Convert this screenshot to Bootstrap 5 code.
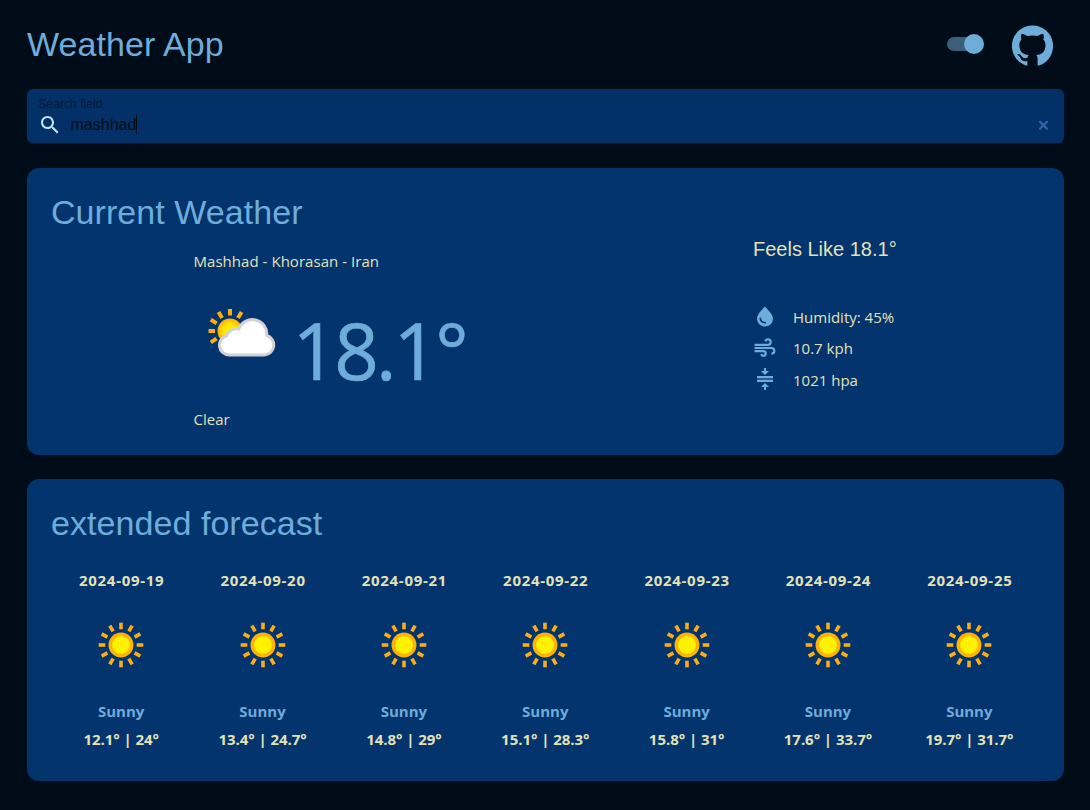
<!DOCTYPE html>
<html lang="en">
<head>
<meta charset="utf-8">
<title>Weather App</title>
<meta name="viewport" content="width=device-width, initial-scale=1">
<link href="https://cdn.jsdelivr.net/npm/bootstrap@5.3.0/dist/css/bootstrap.min.css" rel="stylesheet">
<style>
:root{--sky:#6eacda;--cream:#e2e2b6;--navy:#03346e}
body{background:#000c17;color:var(--cream);font-family:"Open Sans",sans-serif;font-size:15px;line-height:24px;overflow:hidden}
svg{display:block;flex:none}
.page{padding:0 26px 0 27px}
.arial{font-family:"Liberation Sans",Arial,sans-serif}
.title{font-size:34px;line-height:42px;letter-spacing:.06px;color:var(--sky);font-weight:400;margin:0}
.topbar{height:88.5px}
.tools{gap:31.5px;padding:2px 11px 0 0}
.track{width:34px;height:14px;border-radius:7px;background:#3b5f7b;position:relative;margin-bottom:2px}
.knob{position:absolute;width:20px;height:20px;border-radius:50%;background:var(--sky);top:-3px;right:-3.5px}
.search{height:54px;border-radius:6px;background:#033167;padding:9px 15px 0 10.5px;box-shadow:0 1px 2px #031c3a}
.hint{font-size:12px;line-height:13px;color:#021a35;padding-left:1px;letter-spacing:.04px}
.entry{padding-top:2px}
.query{font-size:16px;line-height:24px;color:#000c17;padding-left:9px}
.caret{width:1px;height:19px;background:#000c17}
.clear{margin-top:2px}
.panel{background:var(--navy);border-radius:12px}
.now{height:287px;margin-top:25px;padding:23px 24px 0}
.week{height:302px;margin-top:24.5px;padding:23px 24px 0}
.place{padding-left:142.5px;width:702px;padding-top:16px}
.where{letter-spacing:.04px}
.reading{height:134px;padding-left:8px}
.temp{font-size:78px;line-height:94px;color:var(--sky);letter-spacing:-2.9px;padding:30px 0 0 7px;-webkit-text-stroke:.7px var(--sky)}
.cloud{margin-top:22px}
.feels{font-size:20px;line-height:30px;padding-top:1.5px;margin-bottom:37px}
.metric{height:31.5px;gap:16px}
.press{margin-bottom:2px}
.day{font-weight:700;text-align:center}
.days{margin-left:-.5px}
.date{font-size:15px;letter-spacing:.7px;margin:24px -1px 21px 0}
.cond{color:var(--sky);margin-top:22px}
.range{margin-top:4px;letter-spacing:-.05px}
</style>
</head>
<body>
<svg width="0" height="0" class="position-absolute">
<defs>
<g id="rays" stroke="#f9ae16" stroke-width="3.6"><path id="ray" d="M0-22.3v6.6"/><use href="#ray" transform="rotate(30)"/><use href="#ray" transform="rotate(60)"/><use href="#ray" transform="rotate(90)"/><use href="#ray" transform="rotate(120)"/><use href="#ray" transform="rotate(150)"/><use href="#ray" transform="rotate(180)"/><use href="#ray" transform="rotate(210)"/><use href="#ray" transform="rotate(240)"/><use href="#ray" transform="rotate(270)"/><use href="#ray" transform="rotate(300)"/><use href="#ray" transform="rotate(330)"/></g>
<symbol id="sun" viewBox="-32 -32 64 64"><use href="#rays"/><circle r="12.5" fill="#fdb209"/><circle r="8.7" fill="#fff200" stroke="#ffe000" stroke-width=".8"/></symbol>
</defs>
</svg>
<div class="page">
<header class="topbar d-flex justify-content-between align-items-center">
<h1 class="title arial">Weather App</h1>
<div class="tools d-flex align-items-center">
<div class="track"><div class="knob"></div></div>
<svg width="41" height="41" viewBox="0 0 24 24" fill="#6eacda"><path d="M12 .3a12 12 0 0 0-3.8 23.4c0 0 .8.1.8-.2v-2.4c-3.3.7-4-1.6-4-1.6-.6-1.4-1.4-1.8-1.4-1.8-1-.7.1-.7.1-.7 1.2 0 1.9 1.2 1.9 1.2 1 1.8 2.8 1.3 3.5 1 0-.8.4-1.3.7-1.6-2.7-.3-5.5-1.3-5.5-6 0-1.2.5-2.3 1.3-3.1-.2-.4-.6-1.6 0-3.2 0 0 1-.3 3.4 1.2a11.5 11.5 0 0 1 6 0c2.3-1.5 3.3-1.2 3.3-1.2.6 1.6.2 2.8 0 3.2.9.8 1.3 1.9 1.3 3.2 0 4.6-2.8 5.6-5.5 5.9.5.4.9 1 .9 2.2v3.7c0 .3.8.2.8.2A12 12 0 0 0 12 .3"/></svg>
</div>
</header>
<div class="search arial">
<div class="hint">Search field</div>
<div class="entry d-flex align-items-center">
<svg width="24" height="24" viewBox="0 0 24 24" fill="#c4e4fb"><path d="M15.5 14h-.79l-.28-.27C15.41 12.59 16 11.11 16 9.5 16 5.91 13.09 3 9.5 3S3 5.91 3 9.5 5.91 16 9.5 16c1.61 0 3.09-.59 4.23-1.57l.27.28v.79l5 4.99L20.49 19l-4.99-5zm-6 0C7.01 14 5 11.99 5 9.5S7.01 5 9.5 5 14 7.01 14 9.5 11.99 14 9.5 14z"/></svg>
<span class="query">mashhad</span><span class="caret"></span>
<svg class="clear ms-auto" width="11" height="11" viewBox="0 0 11 11" stroke="#3d5fa6" stroke-width="2.2" stroke-linecap="round"><path d="M2 1.8l7 7M9 1.8l-7 7"/></svg>
</div>
</div>
<section class="panel now">
<h2 class="title arial">Current Weather</h2>
<div class="d-flex">
<div class="place">
<div class="where">Mashhad - Khorasan - Iran</div>
<div class="reading d-flex">
<svg class="cloud" width="84" height="84" viewBox="0 0 84 84">
<defs><radialGradient id="orb"><stop offset=".2" stop-color="#fff200"/><stop offset=".6" stop-color="#ffe000"/><stop offset="1" stop-color="#fdac13"/></radialGradient></defs>
<g stroke="#fcaf12" stroke-width="4"><path d="M28 14v6.5M16.5 17l3.6 6M39.6 17l-3.6 6M8.8 24.6l5.8 3.8M6.5 36h6.5M8.8 47.4l5.8-3.8"/></g>
<circle cx="28" cy="36" r="12.5" fill="url(#orb)"/>
<path d="M27 60a9.8 9.8 0 0 1-2.500-19.200 10.500 10.500 0 0 1 12.300-6.800A14.500 14.500 0 0 1 64.800 40.500 10 10 0 0 1 62.500 60z" fill="#fff" stroke="#d2d2d6" stroke-width="3"/>
</svg>
<span class="temp">18.1°</span>
</div>
<div>Clear</div>
</div>
<div>
<div class="feels arial">Feels Like 18.1°</div>
<div class="metric d-flex align-items-center">
<svg width="24" height="24" viewBox="0 0 24 24"><path d="M12 1.5C9.2 4.7 4 9.5 4 13.7a8 7.8 0 0 0 16 0C20 9.5 14.8 4.7 12 1.5z" fill="#6eacda"/><path d="M7.3 13.2c.2 2.8 2.2 4.3 5 4.6" fill="none" stroke="#03346e" stroke-width="1.6" stroke-linecap="round"/></svg>
<span>Humidity: 45%</span></div>
<div class="metric d-flex align-items-center">
<svg width="24" height="24" viewBox="0 0 24 24" fill="none" stroke="#6eacda" stroke-width="2.2"><path d="M1.5 8.8h13.5a2.7 2.7 0 1 0-2.6-3.4M1.5 12h17a2.8 2.8 0 0 1 0 5.6M1.5 15.2h9a2.3 2.3 0 1 1-2.3 3"/></svg>
<span>10.7 kph</span></div>
<div class="metric d-flex align-items-center">
<svg class="press" width="24" height="24" viewBox="0 0 24 24" fill="#6eacda"><path d="M4 9h16v2H4zM4 13h16v2H4zM11 1h2v3h3l-4 4-4-4h3zM11 23h2v-3h3l-4-4-4 4h3z"/><path d="M4 11h16v2H4z" opacity=".35"/></svg>
<span>1021 hpa</span></div>
</div>
</div>
</section>
<section class="panel week">
<h2 class="title arial">extended forecast</h2>
<div class="days row row-cols-7 gx-0 flex-nowrap">
<div class="col day"><div class="date">2024-09-19</div><svg class="mx-auto" width="64" height="64"><use href="#sun"/></svg><div class="cond">Sunny</div><div class="range">12.1° | 24°</div></div>
<div class="col day"><div class="date">2024-09-20</div><svg class="mx-auto" width="64" height="64"><use href="#sun"/></svg><div class="cond">Sunny</div><div class="range">13.4° | 24.7°</div></div>
<div class="col day"><div class="date">2024-09-21</div><svg class="mx-auto" width="64" height="64"><use href="#sun"/></svg><div class="cond">Sunny</div><div class="range">14.8° | 29°</div></div>
<div class="col day"><div class="date">2024-09-22</div><svg class="mx-auto" width="64" height="64"><use href="#sun"/></svg><div class="cond">Sunny</div><div class="range">15.1° | 28.3°</div></div>
<div class="col day"><div class="date">2024-09-23</div><svg class="mx-auto" width="64" height="64"><use href="#sun"/></svg><div class="cond">Sunny</div><div class="range">15.8° | 31°</div></div>
<div class="col day"><div class="date">2024-09-24</div><svg class="mx-auto" width="64" height="64"><use href="#sun"/></svg><div class="cond">Sunny</div><div class="range">17.6° | 33.7°</div></div>
<div class="col day"><div class="date">2024-09-25</div><svg class="mx-auto" width="64" height="64"><use href="#sun"/></svg><div class="cond">Sunny</div><div class="range">19.7° | 31.7°</div></div>
</div>
</section>
</div>
<script src="https://cdn.jsdelivr.net/npm/bootstrap@5.3.0/dist/js/bootstrap.bundle.min.js"></script>
</body>
</html>
